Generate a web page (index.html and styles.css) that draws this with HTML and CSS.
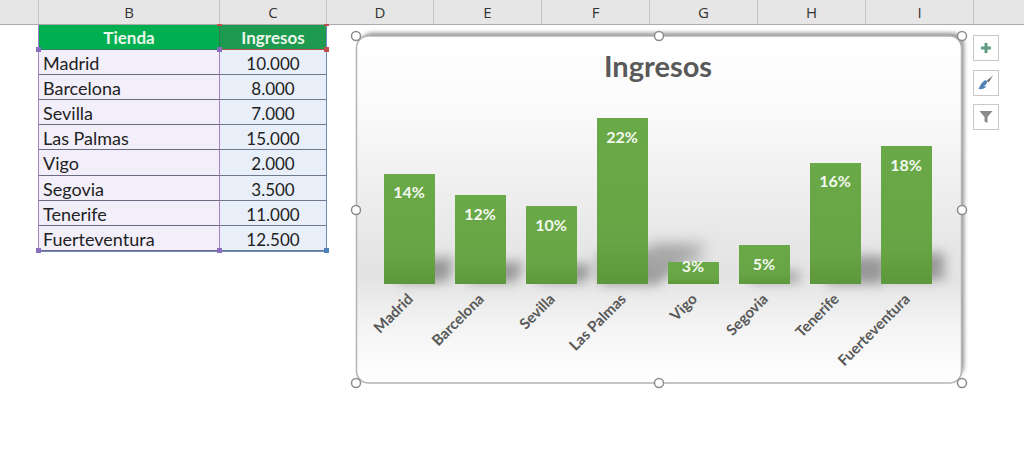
FILE: index.html
```html
<!DOCTYPE html>
<html lang="es">
<head>
    <meta charset="UTF-8">
    <meta name="viewport" content="width=device-width, initial-scale=1.0">
    <title>Ingresos por tienda</title>
    <link rel="stylesheet" href="styles.css">
</head>
<body>
    <div class="col-headers">
        <div class="col-head col-a"></div>
        <div class="col-head col-b">B</div>
        <div class="col-head col-c">C</div>
        <div class="col-head col-d">D</div>
        <div class="col-head col-e">E</div>
        <div class="col-head col-f">F</div>
        <div class="col-head col-g">G</div>
        <div class="col-head col-h">H</div>
        <div class="col-head col-i">I</div>
        <div class="col-head col-rest"></div>
    </div>

    <div class="sheet">
        <div class="data-table">
            <div class="cell head-tienda">Tienda</div>
            <div class="cell head-ingresos">Ingresos</div>

            <div class="cell name">Madrid</div>
            <div class="cell value">10.000</div>
            <div class="cell name">Barcelona</div>
            <div class="cell value">8.000</div>
            <div class="cell name">Sevilla</div>
            <div class="cell value">7.000</div>
            <div class="cell name">Las Palmas</div>
            <div class="cell value">15.000</div>
            <div class="cell name">Vigo</div>
            <div class="cell value">2.000</div>
            <div class="cell name">Segovia</div>
            <div class="cell value">3.500</div>
            <div class="cell name">Tenerife</div>
            <div class="cell value">11.000</div>
            <div class="cell name">Fuerteventura</div>
            <div class="cell value">12.500</div>

            <!-- range handles -->
            <span class="handle h-purple" style="left:-3px;top:22px"></span>
            <span class="handle h-purple" style="left:178px;top:22px"></span>
            <span class="handle h-purple" style="left:-3px;top:223px"></span>
            <span class="handle h-purple" style="left:178px;top:223px"></span>
            <span class="handle h-red" style="left:285px;top:22px"></span>
            <span class="handle h-red-top" style="left:178px;top:-1px"></span>
            <span class="handle h-red-top" style="left:285px;top:-1px"></span>
            <span class="handle h-blue" style="left:285px;top:223px"></span>
        </div>

        <!-- viewBox uses page coordinates -->
        <svg class="chart" viewBox="340 25 640 375" width="640" height="375">
            <defs>
                <linearGradient id="bgFill" x1="0" y1="0" x2="0" y2="1">
                    <stop offset="0" stop-color="#ffffff"/>
                    <stop offset="0.2" stop-color="#fbfbfb"/>
                    <stop offset="0.55" stop-color="#e9e9e9"/>
                    <stop offset="0.69" stop-color="#e3e3e3"/>
                    <stop offset="0.83" stop-color="#f3f3f3"/>
                    <stop offset="1" stop-color="#ffffff"/>
                </linearGradient>
                <linearGradient id="barFill" x1="0" y1="0" x2="0" y2="1">
                    <stop offset="0" stop-color="#6aa947"/>
                    <stop offset="0.75" stop-color="#67a445"/>
                    <stop offset="1" stop-color="#5d973b"/>
                </linearGradient>
                <filter id="blurWide" x="-30%" y="-60%" width="160%" height="220%">
                    <feGaussianBlur stdDeviation="6"/>
                </filter>
                <filter id="blurSoft" x="-50%" y="-100%" width="200%" height="300%">
                    <feGaussianBlur stdDeviation="8"/>
                </filter>
                <filter id="blurFrame" x="-5%" y="-5%" width="110%" height="110%">
                    <feGaussianBlur stdDeviation="2"/>
                </filter>
            </defs>

            <rect class="frame-shadow" x="360" y="33" width="604" height="344" rx="12" filter="url(#blurFrame)"/>
            <rect class="frame" x="356.500" y="36" width="605" height="347" rx="12" fill="url(#bgFill)"/>

            <text class="chart-title" x="658" y="77">Ingresos</text>

            <g class="bar-shadows" filter="url(#blurWide)">
                <polygon points="398,258 454,258 448,282 398,282"/>
                <polygon points="468,262 524,262 516,282 468,282"/>
                <polygon points="538,264 592,264 586,282 538,282"/>
                <polygon points="600,252 686,252 658,284 600,284"/>
                <polygon points="752,272 800,272 798,282 752,282"/>
                <polygon points="826,256 886,256 884,284 826,284"/>
                <polygon points="890,253 944,253 944,280 890,280"/>
            </g>
            <polygon class="bar-shadow-soft" points="650,244 706,244 696,262 640,276" filter="url(#blurSoft)"/>

            <rect class="bar" x="384" y="174" width="51" height="110"/>
            <rect class="bar" x="455" y="195" width="51" height="89"/>
            <rect class="bar" x="526" y="206" width="51" height="78"/>
            <rect class="bar" x="597" y="118" width="51" height="166"/>
            <rect class="bar" x="668" y="262" width="51" height="22"/>
            <rect class="bar" x="739" y="245" width="51" height="39"/>
            <rect class="bar" x="810" y="163" width="51" height="121"/>
            <rect class="bar" x="881" y="146" width="51" height="138"/>

            <text class="pct" x="409" y="198">14%</text>
            <text class="pct" x="480" y="220">12%</text>
            <text class="pct" x="551" y="231">10%</text>
            <text class="pct" x="622" y="143">22%</text>
            <text class="pct" x="693" y="272">3%</text>
            <text class="pct" x="764" y="270">5%</text>
            <text class="pct" x="835" y="187">16%</text>
            <text class="pct" x="906" y="171">18%</text>

            <text class="axis" transform="translate(414 300) rotate(-45)">Madrid</text>
            <text class="axis" transform="translate(485 300) rotate(-45)">Barcelona</text>
            <text class="axis" transform="translate(556 300) rotate(-45)">Sevilla</text>
            <text class="axis" transform="translate(627 300) rotate(-45)">Las Palmas</text>
            <text class="axis" transform="translate(698 300) rotate(-45)">Vigo</text>
            <text class="axis" transform="translate(769 300) rotate(-45)">Segovia</text>
            <text class="axis" transform="translate(840 300) rotate(-45)">Tenerife</text>
            <text class="axis" transform="translate(911 300) rotate(-45)">Fuerteventura</text>

            <circle class="grip" cx="356" cy="36" r="4.500"/>
            <circle class="grip" cx="659" cy="36" r="4.500"/>
            <circle class="grip" cx="962" cy="36" r="4.500"/>
            <circle class="grip" cx="356" cy="210" r="4.500"/>
            <circle class="grip" cx="962" cy="210" r="4.500"/>
            <circle class="grip" cx="356" cy="383" r="4.500"/>
            <circle class="grip" cx="659" cy="383" r="4.500"/>
            <circle class="grip" cx="962" cy="383" r="4.500"/>
        </svg>

        <div class="chart-tools">
            <div class="tool">
                <svg viewBox="0 0 12 12" width="12" height="12"><path d="M4.500 1h3v3.500H11v3H7.500V11h-3V7.500H1v-3h3.500z" fill="#5f9e83"/></svg>
            </div>
            <div class="tool">
                <svg viewBox="0 0 16 16" width="16" height="16">
                    <path d="M15 .5 9 5.500 10.500 7.500z" fill="#666"/>
                    <path d="M9.500 6.500 7.500 5C5 6 2.500 9 .5 14c3 .5 6-.2 8-2.500-1 .1-2 0-3-.2 2-.8 3.300-2.500 4-4.800z" fill="#4f81b5"/>
                </svg>
            </div>
            <div class="tool">
                <svg viewBox="0 0 14 14" width="14" height="14"><path d="M.5 1h13L8.500 7v6l-3-1.500V7z" fill="#8a8a8a"/></svg>
            </div>
        </div>
    </div>
</body>
</html>
```

FILE: styles.css
```css
body {
    margin: 0;
    background: #fff;
    font-family: Lato, "Open Sans", sans-serif;
    overflow: hidden;
}

.col-headers {
    display: flex;
    height: 25px;
    background: #e6e6e6;
    border-bottom: 1px solid #ababab;
    box-sizing: border-box;
}
.col-head {
    box-sizing: border-box;
    border-right: 1px solid #c4c4c4;
    font-family: "Open Sans", sans-serif;
    font-size: 15px;
    line-height: 25px;
    text-align: center;
    color: #333;
}
.col-a { width: 39px; }
.col-b { width: 181px; }
.col-c { width: 107px; }
.col-d { width: 107px; }
.col-e { width: 108px; }
.col-f { width: 108px; }
.col-g { width: 108px; }
.col-h { width: 108px; }
.col-i { width: 108px; }
.col-rest { flex: 1; border-right: none; }

.sheet {
    position: relative;
    height: 443px;
}

.data-table {
    position: relative;
    display: grid;
    grid-template-columns: 181px 106px;
    grid-auto-rows: 25.1px;
    width: 287px;
    margin-left: 38px;
    border-left: 1px solid #a483c4;
    border-right: 1px solid #6c8ebf;
    border-bottom: 1px solid #6c8ebf;
}
.cell {
    box-sizing: border-box;
    padding-top: 1px;
    font-size: 17px;
    line-height: 25px;
    color: #222;
    white-space: nowrap;
}
.head-tienda,
.head-ingresos {
    padding-top: 0;
    color: #eaf6ea;
    font-weight: 700;
    text-align: center;
}
.head-tienda {
    background: #00b050;
    border-right: 1px solid #2c7a4b;
    border-bottom: 1px solid #2f7f68;
}
.head-ingresos {
    background: #1e9a50;
    border-bottom: 1px solid #c0504d;
}
.name {
    background: #f3effa;
    padding-left: 4px;
    font-size: 18px;
    border-bottom: 1px solid #6c6a80;
    border-right: 1px solid #a483c4;
}
.value {
    background: #e9eff9;
    text-align: center;
    border-bottom: 1px solid #6c7a90;
}

.handle {
    position: absolute;
    width: 5px;
    height: 5px;
}
.h-purple { background: #8a6fc0; }
.h-red { background: #c0504d; }
.h-red-top { background: #c0504d; height: 2px; }
.h-blue { background: #4f81bd; }

.chart {
    position: absolute;
    left: 340px;
    top: 0;
}
.frame-shadow { fill: #8f8f8f; }
.frame {
    stroke: #b4b4b4;
    stroke-width: 1.5;
}
.chart-title {
    font-size: 29px;
    font-weight: 700;
    fill: #595959;
    text-anchor: middle;
}
.bar-shadows { fill: #989898; }
.bar-shadow-soft { fill: #a8a8a8; }
.bar { fill: url(#barFill); }
.pct {
    font-size: 16px;
    font-weight: 700;
    fill: #f4f9ef;
    text-anchor: middle;
}
.axis {
    font-size: 15px;
    font-weight: 700;
    fill: #595959;
    text-anchor: end;
}
.grip {
    fill: #fff;
    stroke: #8c8c8c;
    stroke-width: 1.5;
}

.chart-tools {
    position: absolute;
    left: 973px;
    top: 10px;
    display: flex;
    flex-direction: column;
    gap: 8.5px;
}
.tool {
    box-sizing: border-box;
    width: 26px;
    height: 26px;
    background: #fff;
    border: 1px solid #c8c8c8;
    display: flex;
    align-items: center;
    justify-content: center;
}
```
